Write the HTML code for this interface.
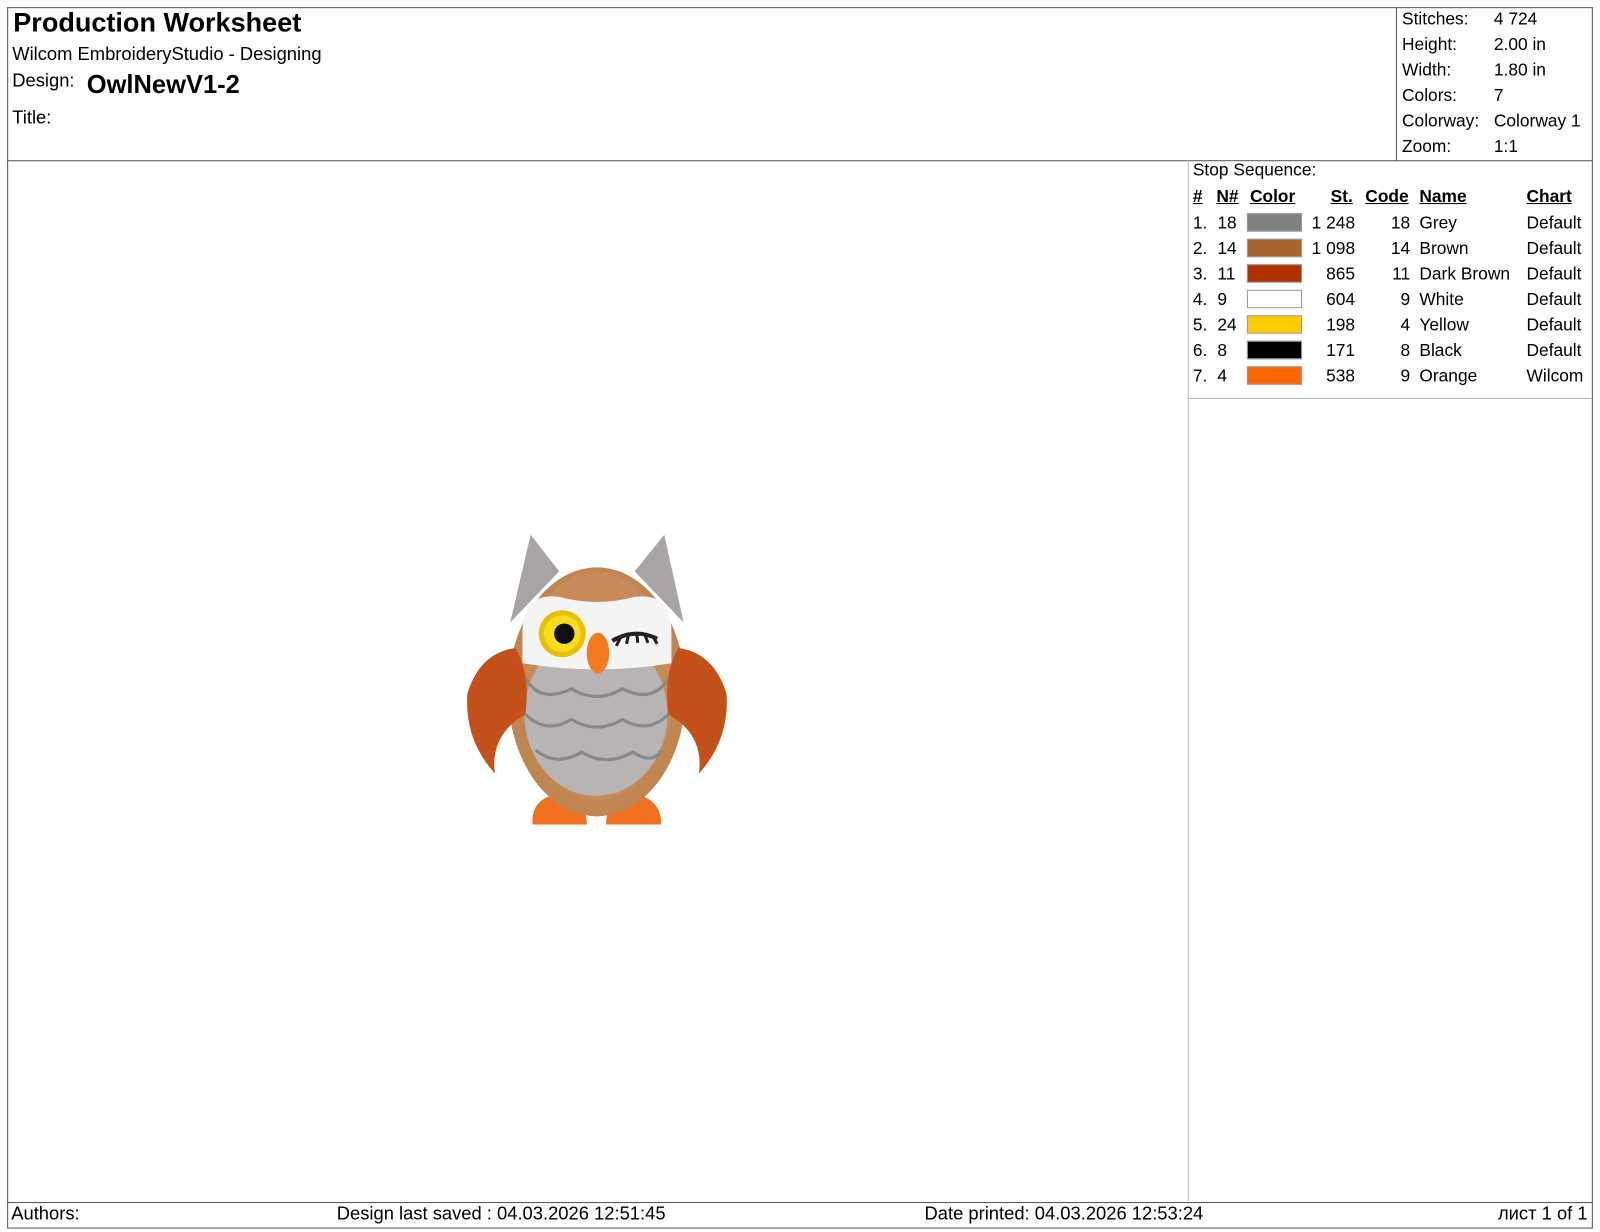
<!DOCTYPE html>
<html><head><meta charset="utf-8"><style>
body{margin:0;width:1600px;height:1231px;background:#fff;position:relative;font-family:"Liberation Sans",Arial,sans-serif;color:#000;overflow:hidden}
#w{position:absolute;left:0;top:0;width:1568px;height:1207px;transform:scale(1.0204);transform-origin:0 0}
.a{position:absolute;white-space:nowrap}
.ln{position:absolute;background:#555}
.t{font-size:17px}
.h{font-size:18px}
u{text-decoration:underline}
</style></head><body><div id="w">
<div class="ln" style="left:7px;top:7px;width:1554px;height:1px"></div>
<div class="ln" style="left:7px;top:157px;width:1554px;height:1px"></div>
<div class="ln" style="left:7px;top:1178px;width:1554px;height:1px"></div>
<div class="ln" style="left:7px;top:1203px;width:1554px;height:1px"></div>
<div class="ln" style="left:7px;top:7px;width:1px;height:1197px"></div>
<div class="ln" style="left:1560px;top:7px;width:1px;height:1197px"></div>
<div class="ln" style="left:1368px;top:7px;width:1px;height:151px"></div>
<div class="ln" style="left:1164px;top:157px;width:1px;height:1021px;background:#bbb"></div>
<div class="ln" style="left:1164px;top:390px;width:396px;height:1px;background:#bbb"></div>

<div class="a" style="left:13px;top:7px;font-size:26.5px;font-weight:bold">Production Worksheet</div>
<div class="a h" style="left:12px;top:43px">Wilcom EmbroideryStudio - Designing</div>
<div class="a h" style="left:12px;top:69px">Design:</div>
<div class="a" style="left:85px;top:69px;font-size:25px;font-weight:bold">OwlNewV1-2</div>
<div class="a h" style="left:12px;top:105px">Title:</div>

<div class="a t" style="left:1374px;top:6px;line-height:25px">Stitches:<br>Height:<br>Width:<br>Colors:<br>Colorway:<br>Zoom:</div>
<div class="a t" style="left:1464px;top:6px;line-height:25px">4 724<br>2.00 in<br>1.80 in<br>7<br>Colorway 1<br>1:1</div>

<div class="a t" style="left:1169px;top:157px">Stop Sequence:</div>
<div class="a t" style="left:1169px;top:183px;font-weight:bold"><u>#</u></div>
<div class="a t" style="left:1192px;top:183px;font-weight:bold"><u>N#</u></div>
<div class="a t" style="left:1225px;top:183px;font-weight:bold"><u>Color</u></div>
<div class="a t" style="left:1304px;top:183px;font-weight:bold"><u>St.</u></div>
<div class="a t" style="left:1338px;top:183px;font-weight:bold"><u>Code</u></div>
<div class="a t" style="left:1391px;top:183px;font-weight:bold"><u>Name</u></div>
<div class="a t" style="left:1496px;top:183px;font-weight:bold"><u>Chart</u></div>

<div class="a t" style="left:1169px;top:206px;line-height:25px">1.<br>2.<br>3.<br>4.<br>5.<br>6.<br>7.</div>
<div class="a t" style="left:1193px;top:206px;line-height:25px">18<br>14<br>11<br>9<br>24<br>8<br>4</div>
<div class="a t" style="left:1260px;top:206px;line-height:25px;width:68px;text-align:right">1 248<br>1 098<br>865<br>604<br>198<br>171<br>538</div>
<div class="a t" style="left:1340px;top:206px;line-height:25px;width:42px;text-align:right">18<br>14<br>11<br>9<br>4<br>8<br>9</div>
<div class="a t" style="left:1391px;top:206px;line-height:25px">Grey<br>Brown<br>Dark Brown<br>White<br>Yellow<br>Black<br>Orange</div>
<div class="a t" style="left:1496px;top:206px;line-height:25px">Default<br>Default<br>Default<br>Default<br>Default<br>Default<br>Wilcom</div>
<div class="a" style="left:1222px;top:209px;width:52px;height:16px;background:#808080;border:1px solid #999"></div>
<div class="a" style="left:1222px;top:234px;width:52px;height:16px;background:#a86530;border:1px solid #999"></div>
<div class="a" style="left:1222px;top:259px;width:52px;height:16px;background:#b03000;border:1px solid #999"></div>
<div class="a" style="left:1222px;top:284px;width:52px;height:16px;background:#fff;border:1px solid #999"></div>
<div class="a" style="left:1222px;top:309px;width:52px;height:16px;background:#ffcc00;border:1px solid #999"></div>
<div class="a" style="left:1222px;top:334px;width:52px;height:16px;background:#000;border:1px solid #999"></div>
<div class="a" style="left:1222px;top:359px;width:52px;height:16px;background:#ff6600;border:1px solid #999"></div>

<div class="a h" style="left:11px;top:1179px">Authors:</div>
<div class="a h" style="left:330px;top:1179px">Design last saved : 04.03.2026 12:51:45</div>
<div class="a h" style="left:906px;top:1179px">Date printed: 04.03.2026 12:53:24</div>
<div class="a h" style="left:1468px;top:1179px">лист 1 of 1</div>

<svg class="a" style="left:0;top:0" width="1568" height="1207">
<polygon points="520,524 548,560 500,610" fill="#a8a4a4"/>
<polygon points="651,524 670,610 622,560" fill="#a8a4a4"/>
<path d="M522,808 Q520,782 548,778 Q575,782 575,808 Z" fill="#f07020"/>
<path d="M594,808 Q594,782 620,778 Q648,782 648,808 Z" fill="#f07020"/>
<ellipse cx="585" cy="678" rx="87" ry="122" fill="#c08550"/>
<ellipse cx="585" cy="672" rx="76" ry="112" fill="#c88a58"/>
<ellipse cx="584" cy="700" rx="70" ry="80" fill="#b8b4b4"/>
<path d="M512,620 Q512,580 548,585 Q585,595 622,585 Q658,580 658,620 L658,650 Q585,662 512,650Z" fill="#f4f4f4"/>
<circle cx="551" cy="621" r="23" fill="#e8c000"/>
<circle cx="551" cy="621" r="18" fill="#f8dc20"/>
<circle cx="553" cy="621" r="10" fill="#111"/>
<path d="M600,628 Q622,615 644,626" stroke="#222" stroke-width="4" fill="none"/>
<path d="M608,625 l-4,8 M616,622 l-2,9 M624,621 l1,9 M632,622 l3,8 M640,624 l4,7" stroke="#222" stroke-width="3"/>
<ellipse cx="586" cy="640" rx="11" ry="20" fill="#f47a20"/>
<path d="M515,665 Q530,690 560,675 Q585,690 610,675 Q640,690 655,665" stroke="#888" stroke-width="3" fill="none"/>
<path d="M515,700 Q535,720 560,705 Q585,720 610,705 Q635,720 655,700" stroke="#888" stroke-width="3" fill="none"/>
<path d="M525,735 Q545,752 570,737 Q595,752 620,737 Q640,750 648,735" stroke="#888" stroke-width="3" fill="none"/>
<path d="M505,635 Q470,640 458,680 Q455,725 485,758 Q480,720 515,700 Q520,660 505,635Z" fill="#c4501a"/>
<path d="M665,635 Q700,640 712,680 Q715,725 685,758 Q690,720 655,700 Q650,660 665,635Z" fill="#c4501a"/>
</svg>
</div></body></html>
